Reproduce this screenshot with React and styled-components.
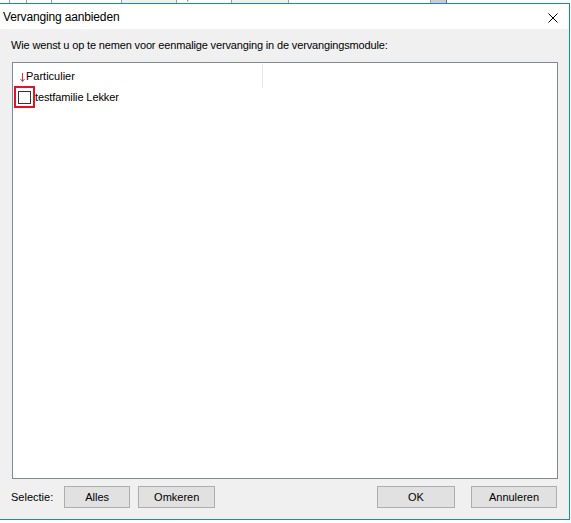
import React from "react";
import styled, { createGlobalStyle } from "styled-components";

const Global = createGlobalStyle`
  html, body { margin: 0; padding: 0; background: #ffffff; }
  body { font-family: "Liberation Sans", Arial, sans-serif; font-size: 11px; color: #000; }
  #root { width: 571px; height: 523px; overflow: hidden; }
`;

const Page = styled.div`
  display: flex;
  flex-direction: column;
  width: 571px;
`;

const Strip = styled.div`
  display: flex;
  height: 3px;
  overflow: hidden;
  background: #ffffff;
`;

const StripCell = styled.div`
  width: ${(p) => p.$w}px;
  flex: none;
  height: 3px;
  overflow: hidden;
  background: ${(p) => p.$bg || "#ffffff"};
  border-right: 1px solid ${(p) => p.$line || "#a0a0a0"};
  box-sizing: border-box;
  font-size: 11px;
  line-height: 13px;
  padding-left: 3px;
`;

const StripText = styled.div`
  margin-top: -10px;
`;

const Window = styled.div`
  width: 570px;
  height: 517px;
  box-sizing: border-box;
  border-top: 1px solid #1883d7;
  border-right: 1px solid #1883d7;
  border-bottom: 1px solid #1883d7;
  display: flex;
  flex-direction: column;
  background: #f0f0f0;
`;

const TitleBar = styled.div`
  height: 25px;
  flex: none;
  background: #ffffff;
  display: flex;
  align-items: center;
  justify-content: space-between;
  padding: 0 11px 0 3px;
`;

const Title = styled.div`
  font-size: 12px;
  letter-spacing: -0.15px;
  color: #000;
  padding-top: 1px;
`;

const Close = styled.div`
  width: 10px;
  height: 10px;
  display: flex;
  padding-top: 2px;
`;

const Body = styled.div`
  flex: 1;
  display: flex;
  flex-direction: column;
  padding: 10px 11px 11px 0;
`;

const Prompt = styled.div`
  padding-left: 11px;
  height: 13px;
  line-height: 13px;
  letter-spacing: -0.15px;
`;

const ListBox = styled.div`
  margin: 10px 0 0 12px;
  height: 417px;
  box-sizing: border-box;
  border: 1px solid #828790;
  background: #ffffff;
  display: flex;
  flex-direction: column;
`;

const Header = styled.div`
  display: flex;
  height: 24px;
  padding-top: 1px;
`;

const HeaderCell = styled.div`
  width: 250px;
  box-sizing: border-box;
  border-right: 1px solid #e5e5e5;
  display: flex;
  align-items: center;
  padding-left: 7px;
  gap: 1px;
`;

const Arrow = styled.svg`
  margin-top: 3px;
`;

const HeaderText = styled.span`
  font-size: 11px;
`;

const Row = styled.div`
  display: flex;
  align-items: center;
  height: 22px;
  margin-top: -2px;
`;

const Focus = styled.div`
  width: 21px;
  height: 22px;
  box-sizing: border-box;
  border: 2px solid #e81123;
  margin-left: 1px;
  display: flex;
  align-items: center;
  justify-content: center;
`;

const Check = styled.div`
  width: 13px;
  height: 13px;
  box-sizing: border-box;
  border: 1px solid #333333;
  background: #ffffff;
`;

const RowText = styled.span`
  font-size: 11px;
  letter-spacing: -0.1px;
  padding-bottom: 1px;
`;

const Footer = styled.div`
  display: flex;
  align-items: center;
  margin-top: 7px;
  padding: 0 1px 0 11px;
`;

const Label = styled.span`
  margin-right: 11px;
  font-size: 11px;
`;

const Button = styled.button`
  width: ${(p) => p.$w}px;
  height: 22px;
  margin-left: ${(p) => p.$ml || 0}px;
  box-sizing: border-box;
  border: 1px solid #adadad;
  background: #e1e1e1;
  font-family: "Liberation Sans", Arial, sans-serif;
  font-size: 11px;
  color: #000;
  padding: 0 0 1px 0;
  border-radius: 0;
`;

const Spacer = styled.div`
  flex: 1;
`;

export default function App() {
  return (
    <Page>
      <Global />
      <Strip>
        <StripCell $w={10} />
        <StripCell $w={17} />
        <StripCell $w={25} />
        <StripCell $w={70}><StripText>Lw</StripText></StripCell>
        <StripCell $w={55} $bg="#f0f0f0" />
        <StripCell $w={55}><StripText>0,00</StripText></StripCell>
        <StripCell $w={57} $bg="#f0f0f0" />
        <StripCell $w={142} />
        <StripCell $w={16} $bg="#cdcdcd" $line="#6d6d6d" />
        <StripCell $w={124} $line="#ffffff" />
      </Strip>
      <Window>
        <TitleBar>
          <Title>Vervanging aanbieden</Title>
          <Close>
            <svg width="10" height="10" viewBox="0 0 10 10">
              <path d="M0.5 0.5 L9.5 9.5 M9.5 0.5 L0.5 9.5" stroke="#000" strokeWidth="1" fill="none" />
            </svg>
          </Close>
        </TitleBar>
        <Body>
          <Prompt>Wie wenst u op te nemen voor eenmalige vervanging in de vervangingsmodule:</Prompt>
          <ListBox>
            <Header>
              <HeaderCell>
                <Arrow width="5" height="9" viewBox="0 0 5 9">
                  <path d="M2.5 0 V8 M0.5 6 L2.5 8.5 L4.5 6" stroke="#d33" strokeWidth="1" fill="none" />
                </Arrow>
                <HeaderText>Particulier</HeaderText>
              </HeaderCell>
            </Header>
            <Row>
              <Focus>
                <Check />
              </Focus>
              <RowText>testfamilie Lekker</RowText>
            </Row>
          </ListBox>
          <Footer>
            <Label>Selectie:</Label>
            <Button $w={66}>Alles</Button>
            <Button $w={77} $ml={8}>Omkeren</Button>
            <Spacer />
            <Button $w={78}>OK</Button>
            <Button $w={86} $ml={16}>Annuleren</Button>
          </Footer>
        </Body>
      </Window>
    </Page>
  );
}
